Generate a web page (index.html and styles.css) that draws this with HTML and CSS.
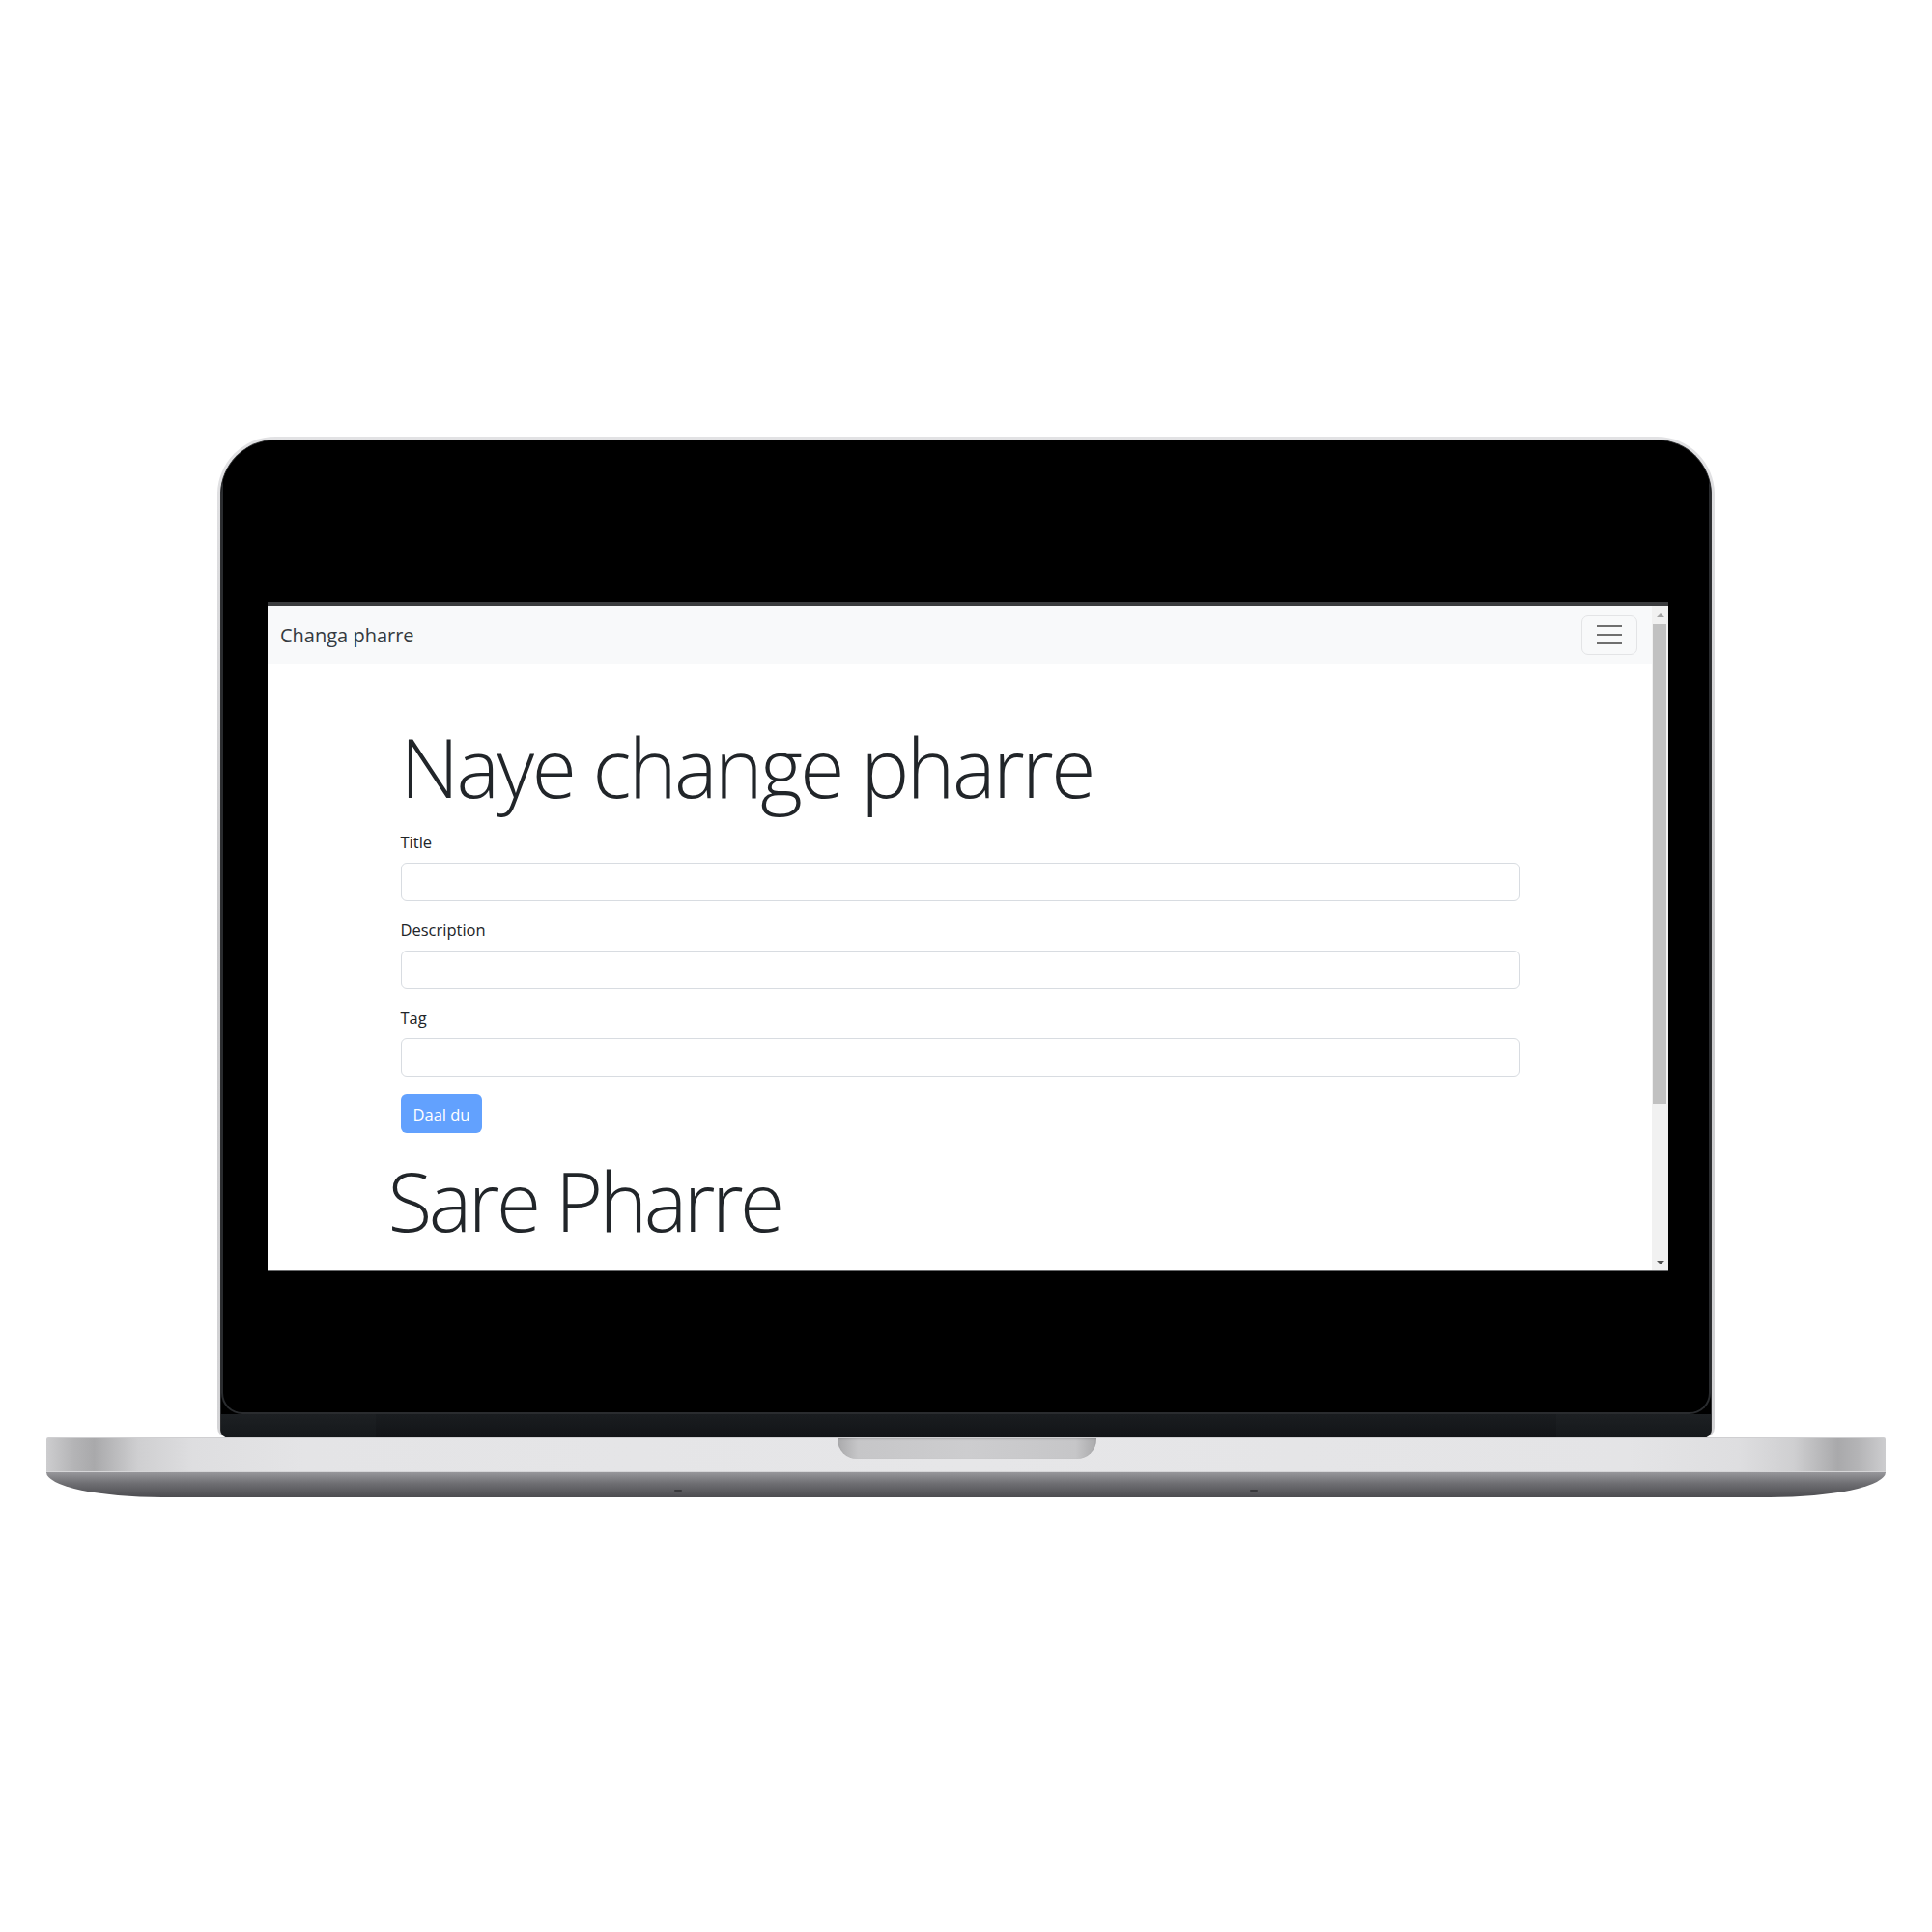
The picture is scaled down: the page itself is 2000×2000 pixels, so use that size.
FILE: index.html
```html
<!DOCTYPE html>
<html lang="en">
<head>
<meta charset="utf-8">
<title>Changa pharre</title>
<link rel="stylesheet" href="styles.css">
</head>
<body>
<div class="laptop">
  <div class="lid">
    <div class="bezel">
      <div class="display">
        <div class="screen">
          <div class="page">
            <nav class="navbar">
              <span class="brand">Changa pharre</span>
              <button class="toggler" type="button" aria-label="Toggle navigation">
                <span class="bar"></span><span class="bar"></span><span class="bar"></span>
              </button>
            </nav>
            <div class="container">
              <h1 class="display-title">Naye change pharre</h1>
              <form class="form">
                <div class="group">
                  <label class="label">Title</label>
                  <div class="input"></div>
                </div>
                <div class="group">
                  <label class="label">Description</label>
                  <div class="input"></div>
                </div>
                <div class="group">
                  <label class="label">Tag</label>
                  <div class="input"></div>
                </div>
                <button class="btn" type="button" disabled>Daal du</button>
              </form>
            </div>
            <div class="container wide">
              <h1 class="display-title">Sare Pharre</h1>
            </div>
          </div>
          <div class="scrollbar">
            <div class="arrow up"></div>
            <div class="thumb"></div>
            <div class="track"></div>
            <div class="arrow down"></div>
          </div>
        </div>
      </div>
      <div class="band">
        <div class="band-side"></div>
        <div class="band-mid"></div>
        <div class="band-side"></div>
      </div>
    </div>
  </div>
  <div class="base">
    <div class="base-top"><div class="notch"></div></div>
    <div class="base-bottom">
      <span class="foot"></span><span class="foot"></span>
    </div>
  </div>
</div>
</body>
</html>
```

FILE: styles.css
```css
html, body {
  margin: 0;
  padding: 0;
  background: #ffffff;
}
body {
  width: 2000px;
  height: 2000px;
  font-family: "Open Sans", "Noto Sans", sans-serif;
  color: #212529;
}
.laptop {
  padding-top: 452px;
}
.lid {
  width: 1550px;
  height: 1036px;
  margin: 0 auto;
  box-sizing: border-box;
  padding: 3px 3px 0 3px;
  border-radius: 60px 60px 10px 10px;
  background: linear-gradient(#e2e2e4, #c9c9cb 50%, #d4d4d6);
}
.bezel {
  height: 100%;
  box-sizing: border-box;
  border: 1px solid #2e2f31;
  border-bottom: none;
  border-radius: 57px 57px 8px 8px;
  background: #000;
  display: flex;
  flex-direction: column;
  overflow: hidden;
}
.display {
  flex: 1;
  background: #000;
  box-sizing: border-box;
  border: 2px solid #2a2c2f;
  border-top: none;
  border-radius: 0 0 22px 22px;
  padding: 167px 42px 0 46px;
}
.band {
  height: 24px;
  display: flex;
  background: #181b1e;
}
.band-side {
  width: 160px;
  background: linear-gradient(#1d2023, #15181b);
}
.band-mid {
  flex: 1;
  background: linear-gradient(#1a1d20, #121417);
}

/* screen */
.screen {
  width: 1450px;
  height: 693px;
  box-sizing: border-box;
  border-top: 4px solid #3b3c3e;
  border-bottom: 1px solid #6a6b6d;
  background: #ffffff;
  display: flex;
  overflow: hidden;
}
.page {
  flex: 1;
  overflow: hidden;
}
.navbar {
  height: 60px;
  box-sizing: border-box;
  background: #f8f9fa;
  display: flex;
  align-items: center;
  justify-content: space-between;
  padding: 0 15px 0 13px;
}
.brand {
  font-size: 20px;
  color: #343a40;
}
.toggler {
  width: 58px;
  height: 41px;
  box-sizing: border-box;
  border: 1px solid #e3e4e6;
  border-radius: 7px;
  background: transparent;
  padding: 0;
  display: flex;
  flex-direction: column;
  align-items: center;
  justify-content: center;
  gap: 7px;
}
.bar {
  display: block;
  width: 26px;
  height: 2px;
  background: #6f6f6f;
}
.container {
  width: 1158px;
  margin: 0 auto;
}
.container.wide {
  width: 1184px;
}
.display-title {
  margin: 55px 0 0 0;
  font-size: 84px;
  line-height: 104px;
  letter-spacing: -2.5px;
  font-weight: 300;
  color: #212529;
}
.wide .display-title {
  margin-top: 18px;
  letter-spacing: -3.5px;
}
.form {
  margin-top: 12px;
}
.group {
  margin-bottom: 16px;
}
.label {
  display: block;
  font-size: 16.5px;
  line-height: 27px;
  margin-bottom: 8px;
  color: #212529;
}
.input {
  height: 40px;
  box-sizing: border-box;
  border: 1px solid #d8dce1;
  border-radius: 6px;
  background: #fff;
}
.btn {
  height: 40px;
  box-sizing: border-box;
  padding: 0 13px;
  margin-top: 2px;
  border: none;
  border-radius: 6px;
  background: #62a1fe;
  color: #ffffff;
  font-family: "Open Sans", "Noto Sans", sans-serif;
  font-size: 16.5px;
}

/* scrollbar */
.scrollbar {
  width: 17px;
  background: #f1f1f1;
  display: flex;
  flex-direction: column;
}
.arrow {
  height: 19px;
  display: flex;
  align-items: center;
  justify-content: center;
}
.arrow.up::before {
  content: "";
  border-left: 4px solid transparent;
  border-right: 4px solid transparent;
  border-bottom: 4px solid #a3a3a3;
}
.arrow.down {
  height: 17px;
}
.arrow.down::before {
  content: "";
  border-left: 4px solid transparent;
  border-right: 4px solid transparent;
  border-top: 4px solid #505050;
}
.thumb {
  height: 497px;
  margin: 0 2px 0 1px;
  background: #c1c1c1;
}
.track {
  flex: 1;
}

/* base */
.base {
  width: 1904px;
  margin: 0 auto;
}
.base-top {
  height: 35px;
  box-sizing: border-box;
  border-top: 1px solid #cfcfd1;
  background: linear-gradient(90deg, #cdcdcf 0, #b4b4b6 1.5%, #a9a9ab 2.6%, #cfcfd1 5%, #dedee0 8%, #e4e4e6 14%, #e6e6e8 50%, #e4e4e6 86%, #dedee0 92%, #cfcfd1 95%, #a9a9ab 97.4%, #b4b4b6 98.5%, #cdcdcf 100%);
  border-radius: 2px 2px 0 0;
  display: flex;
  justify-content: center;
}
.notch {
  width: 268px;
  height: 21px;
  margin-left: 2px;
  border-radius: 0 0 20px 20px;
  background: linear-gradient(90deg, #a9a9ab, #c6c6c8 8%, #cdcdcf 50%, #c6c6c8 92%, #a9a9ab);
  box-shadow: inset 0 1px 2px rgba(0,0,0,0.15);
}
.base-bottom {
  height: 27px;
  box-sizing: border-box;
  border-top: 1px solid #d6d6d8;
  border-radius: 0 0 120px 120px / 0 0 26px 26px;
  background: linear-gradient(#97979b, #6e6e72 45%, #4c4c50);
  display: flex;
  justify-content: center;
  align-items: flex-end;
  gap: 588px;
}
.foot {
  width: 8px;
  height: 2px;
  margin-bottom: 6px;
  background: #3a3a3d;
  border-radius: 1px;
}
```
